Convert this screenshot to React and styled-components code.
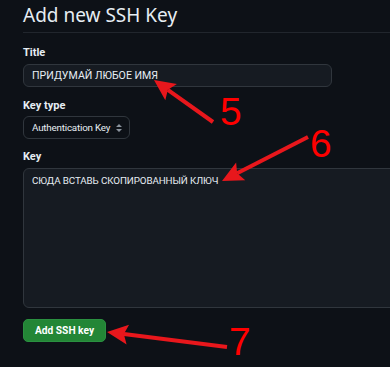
import React from 'react';
import styled, { createGlobalStyle } from 'styled-components';

const GlobalStyle = createGlobalStyle`
    body {
        margin: 0;
        background: #ffffff;
        font-family: Roboto, "Liberation Sans", sans-serif;
    }
`;

const Page = styled.div`
    position: relative;
    height: 367px;
    background: #0d1117;
    color: #e6edf3;
    padding: 0 0 0 23px;
    box-sizing: border-box;
    overflow: hidden;
`;

const Header = styled.h2`
    margin: 0;
    padding: 5px 0 8px 0;
    height: 33px;
    box-sizing: border-box;
    font-family: "Noto Sans", "Liberation Sans", sans-serif;
    font-size: 19px;
    font-weight: 400;
    line-height: 20px;
    border-bottom: 1px solid #21262d;
`;

const Form = styled.div`
    display: flex;
    flex-direction: column;
    align-items: flex-start;
    padding-top: 13px;
`;

const Label = styled.label`
    font-size: 11px;
    font-weight: 700;
    line-height: 14px;
    margin-bottom: ${({ $gap }) => $gap}px;
`;

const Field = styled.div`
    box-sizing: border-box;
    width: ${({ $width }) => $width};
    height: ${({ $height }) => $height}px;
    background: #161b22;
    border: 1px solid #30363d;
    border-radius: 6px;
    padding: ${({ $pad }) => $pad || '0 8px'};
    font-size: ${({ $size }) => $size || 10.6}px;
    letter-spacing: ${({ $spacing }) => $spacing || 0}px;
    display: flex;
    align-items: ${({ $top }) => ($top ? 'flex-start' : 'center')};
    margin-bottom: ${({ $mb }) => $mb}px;
    color: #e6edf3;
`;

const Select = styled.div`
    box-sizing: border-box;
    height: 23px;
    display: flex;
    align-items: center;
    gap: 5px;
    padding: 0 6px 0 8px;
    border: 1px solid #30363d;
    border-radius: 6px;
    background: #0d1117;
    font-size: 9.8px;
    letter-spacing: -0.2px;
    margin-bottom: 11px;
`;

const Button = styled.button`
    height: 23px;
    padding: 0 11px;
    background: #238636;
    border: 1px solid #2a9040;
    border-radius: 5px;
    color: #ffffff;
    font-family: Roboto, "Liberation Sans", sans-serif;
    font-size: 10.2px;
    font-weight: 700;
`;

const Overlay = styled.svg`
    position: absolute;
    left: 0;
    top: 0;
    pointer-events: none;
`;

const Num = styled.text`
    font-family: "Liberation Sans", Arial, sans-serif;
    font-size: 39px;
    fill: #ff0000;
`;

const Arrow = ({ x1, y1, x2, y2 }) => {
    const dx = x2 - x1;
    const dy = y2 - y1;
    const len = Math.hypot(dx, dy);
    const ux = dx / len;
    const uy = dy / len;
    const hl = 21;
    const hw = 10;
    const bx = x2 - ux * hl;
    const by = y2 - uy * hl;
    const pts = `${x2},${y2} ${bx - uy * hw},${by + ux * hw} ${bx + ux * 4},${by + uy * 4} ${bx + uy * hw},${by - ux * hw}`;
    return (
        <g>
            <line x1={x1} y1={y1} x2={bx + ux * 4} y2={by + uy * 4} stroke="#e8171c" strokeWidth="4" />
            <polygon points={pts} fill="#e8171c" />
        </g>
    );
};

const SortIcon = () => (
    <svg width="8" height="10" viewBox="0 0 8 10">
        <path d="M4 1 L7 4 H1 Z M4 9 L1 6 H7 Z" fill="#8b949e" />
    </svg>
);

const App = () => {
    return (
        <>
            <GlobalStyle />
            <Page>
                <Header>Add new SSH Key</Header>
                <Form>
                    <Label $gap={4}>Title</Label>
                    <Field $width="309px" $height={23} $mb={12}>ПРИДУМАЙ ЛЮБОЕ ИМЯ</Field>
                    <Label $gap={3}>Key type</Label>
                    <Select>
                        Authentication Key
                        <SortIcon />
                    </Select>
                    <Label $gap={4}>Key</Label>
                    <Field $width="400px" $height={140} $mb={11} $top $pad="6px 8px" $size={9.8} $spacing={-0.1}>
                        СЮДА ВСТАВЬ СКОПИРОВАННЫЙ КЛЮЧ
                    </Field>
                    <Button>Add SSH key</Button>
                </Form>
                <Overlay width="390" height="367">
                    <Arrow x1={213} y1={122} x2={154} y2={80} />
                    <Num x="220" y="125">5</Num>
                    <Arrow x1={308} y1={137} x2={222} y2={181} />
                    <Num x="310" y="157">6</Num>
                    <Arrow x1={227} y1={347} x2={107} y2={332} />
                    <Num x="229" y="355">7</Num>
                </Overlay>
            </Page>
        </>
    );
};

export default App;
